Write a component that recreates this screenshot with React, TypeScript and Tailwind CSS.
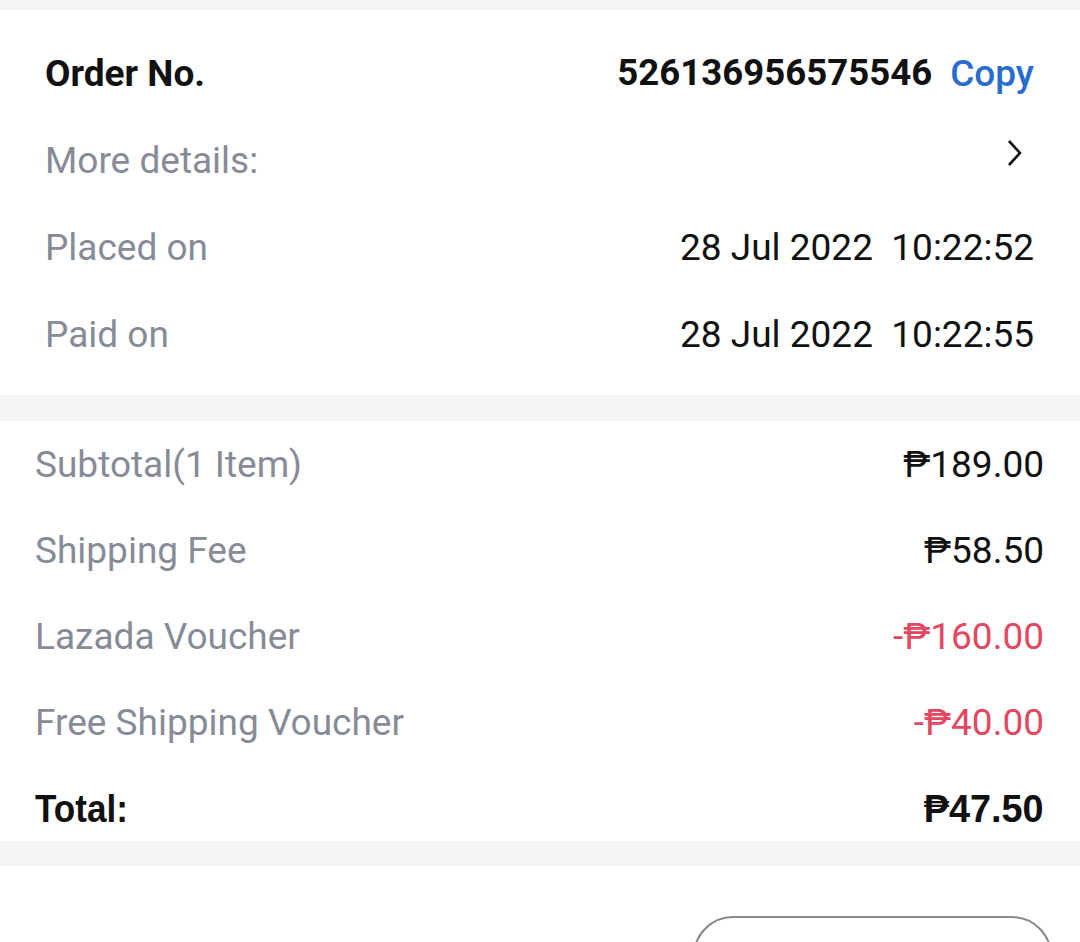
import React from "react";

const Row = ({ label, value, labelCls = "", valueCls = "" }: { label: React.ReactNode; value: React.ReactNode; labelCls?: string; valueCls?: string }) => (
  <div className="flex h-[86px] items-center justify-between">
    <span className={labelCls}>{label}</span>
    <span className={valueCls}>{value}</span>
  </div>
);

export default function App() {
  return (
    <div className="w-[1080px] h-[942px] overflow-hidden bg-[#f5f5f5] font-['Roboto',sans-serif] text-[37px] leading-none">
      <div className="h-[10px]" />
      <div className="bg-white pl-[45px] pr-[46px] pt-[20px] pb-[17px]">
        <div className="flex h-[87px] items-center justify-between">
          <span className="font-bold text-[#111] text-[37px]">Order No.</span>
          <span className="flex items-center">
            <span className="font-bold text-[#111] text-[36.6px]">526136956575546</span>
            <span className="ml-[18px] text-[#2a6bd0] text-[37px] font-medium">Copy</span>
          </span>
        </div>
        <div className="flex h-[87px] items-center justify-between">
          <span className="text-[#878b97]">More details:</span>
          <svg width="18" height="28" viewBox="0 0 18 28" className="mr-[10px] mb-[16px]">
            <path d="M3 2 L14 14 L3 26" fill="none" stroke="#111" strokeWidth="2.6" />
          </svg>
        </div>
        <div className="flex h-[87px] items-center justify-between">
          <span className="text-[#878b97]">Placed on</span>
          <span className="text-[#111] whitespace-pre">28 Jul 2022  10:22:52</span>
        </div>
        <div className="flex h-[87px] items-center justify-between">
          <span className="text-[#878b97]">Paid on</span>
          <span className="text-[#111] whitespace-pre">28 Jul 2022  10:22:55</span>
        </div>
      </div>
      <div className="h-[26px]" />
      <div className="bg-white pl-[35px] pr-[36px] h-[420px]">
        <Row label="Subtotal(1 Item)" value="₱189.00" labelCls="text-[#878b97]" valueCls="text-[#111]" />
        <Row label="Shipping Fee" value="₱58.50" labelCls="text-[#878b97]" valueCls="text-[#111]" />
        <Row label="Lazada Voucher" value="-₱160.00" labelCls="text-[#878b97]" valueCls="text-[#e2485f]" />
        <Row label="Free Shipping Voucher" value="-₱40.00" labelCls="text-[#878b97]" valueCls="text-[#e2485f]" />
        <div className="flex h-[76px] items-start justify-between pt-[10px]">
          <div className="flex h-[66px] w-full items-center justify-between font-['Liberation_Sans',sans-serif] font-bold text-[39px] text-[#111]">
            <span className="inline-block origin-left scale-x-[0.9]">Total:</span>
            <span className="inline-block origin-right scale-x-[0.97]">₱47.50</span>
          </div>
        </div>
      </div>
      <div className="h-[25px]" />
      <div className="bg-white h-[76px] flex justify-end pr-[28px] pt-[50px]">
        <div className="w-[359px] h-[80px] rounded-[40px] border-2 border-[#8a8a8a] bg-white" />
      </div>
    </div>
  );
}
